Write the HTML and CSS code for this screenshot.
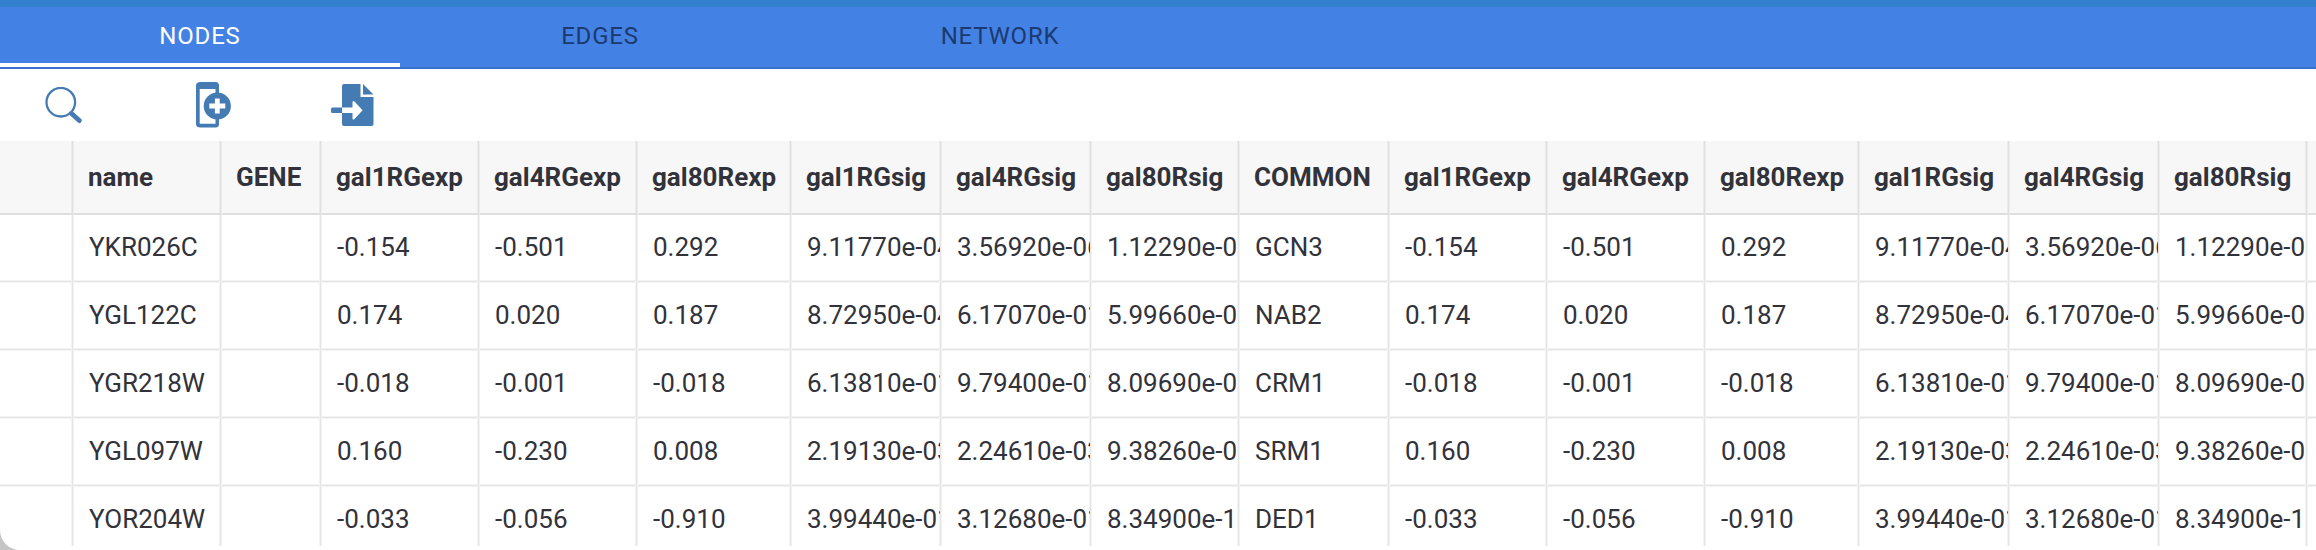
FILE: index.html
```
<!DOCTYPE html>
<html lang="en">
<head>
<meta charset="utf-8">
<title>Table browser</title>
<link rel="stylesheet" href="styles.css">
</head>
<body>
<div class="panel">
  <nav class="tabs">
    <div class="tab active">NODES</div>
    <div class="tab">EDGES</div>
    <div class="tab">NETWORK</div>
  </nav>
  <div class="toolbar">
    <svg class="icon" width="38" height="38" viewBox="0 0 38 38"><circle cx="16.800" cy="15.200" r="14.300" fill="none" stroke="#457bb3" stroke-width="2.300"/><path d="M27.500 26.500L35.300 33.600" stroke="#457bb3" stroke-width="4.800" stroke-linecap="round"/></svg>
    <svg class="icon phone" width="36" height="46" viewBox="0 0 36 46"><path fill="#457bb3" fill-rule="evenodd" d="M4.500 0H19.500Q23 0 23 3.500V42Q23 45.500 19.500 45.500H4.500Q0 45.500 0 42V3.500Q0 0 4.500 0ZM3.700 7V41.700H19.500V7Z"/><circle cx="21.300" cy="24" r="13.600" fill="#457bb3"/><path d="M21.300 16.500V31.500M13.300 24H29.300" stroke="#fff" stroke-width="4.800" stroke-linejoin="round"/></svg>
    <svg class="icon file" width="43" height="42" viewBox="0 0 43 42"><path fill="#457bb3" d="M13 0H29.500V13H42.500V40Q42.500 42 40.500 42H13Q11 42 11 40V2Q11 0 13 0ZM32 0L42.500 10.500H32ZM11 23.500H1.500Q0 23.500 0 25V27.500Q0 29 1.500 29H11Z"/><path fill="#fff" d="M11 23.500H21.500V18.500Q21.500 16 23.500 17.500L31.600 26.200L23.500 35Q21.500 36.500 21.500 34V29H11Z"/></svg>
  </div>
  <div class="grid" id="grid"></div>
</div>
<script src="table.js"></script>
</body>
</html>
```

FILE: styles.css
```
body {
  margin: 0;
  height: 550px;
  overflow: hidden;
  background: #c4c4c4;
  font-family: Roboto, sans-serif;
  color: #32323a;
}
.panel {
  height: 550px;
  overflow: hidden;
  background: #fff;
  border-bottom-left-radius: 20px;
}
.tabs {
  display: flex;
  box-sizing: border-box;
  height: 69px;
  border-top: 7px solid #3380cf;
  border-bottom: 2px solid #3970cc;
  background: #4481e4;
}
.tab {
  box-sizing: border-box;
  width: 400px;
  height: 60px;
  padding: 2px 0 0;
  line-height: 54px;
  text-align: center;
  font-size: 24px;
  letter-spacing: 0.8px;
  color: #1b3a70;
}
.tab.active {
  border-bottom: 4px solid #fff;
  color: #fff;
}
.toolbar {
  display: flex;
  align-items: flex-start;
  box-sizing: border-box;
  height: 72px;
  padding: 13px 0 0 44px;
}
.icon {
  flex: none;
  margin-top: 5px;
}
.icon.phone {
  margin: 0 0 0 114px;
}
.icon.file {
  margin: 2px 0 0 98.5px;
}
.grid {
  width: 2460px;
  height: 405px;
  overflow: hidden;
}
.row {
  display: grid;
  grid-template-columns: 74px 148px 100px 158px 158px 154px 150px 150px 148px 150px 158px 158px 154px 150px 150px 148px 150px;
  height: 68px;
}
/* Cell rules are a darker centre pixel with a lighter one on each side. */
.cell {
  --edge: #f3f3f3;
  --core: #e5e5e6;
  box-sizing: border-box;
  overflow: hidden;
  white-space: nowrap;
  padding-left: 15px;
  border-right: 2px solid transparent;
  border-bottom: 3px solid transparent;
  background-image:
    linear-gradient(90deg, var(--edge) 1px, var(--core) 1px, var(--core) 2px, var(--edge) 2px),
    linear-gradient(var(--edge) 1px, var(--core) 1px, var(--core) 2px, var(--edge) 2px);
  background-origin: border-box;
  background-position: right top, left bottom;
  background-size: 3px 100%, 100% 3px;
  background-repeat: no-repeat;
  font-size: 26px;
  line-height: 64px;
}
.head {
  height: 74px;
}
.head .cell {
  --edge: #ececec;
  --core: #dfdfe0;
  padding-left: 14px;
  border-bottom: 2px solid #dfdfe1;
  background-color: #f7f7f7;
  background-size: 3px 100%, 0 0;
  font-weight: 700;
  line-height: 72px;
}
```

FILE: table.js
```
const exp = ["gal1RGexp", "gal4RGexp", "gal80Rexp", "gal1RGsig", "gal4RGsig", "gal80Rsig"];
const rows = [
  ["YKR026C", "GCN3", "-0.154", "-0.501", "0.292", "9.11770e-04", "3.56920e-06", "1.12290e-0"],
  ["YGL122C", "NAB2", "0.174", "0.020", "0.187", "8.72950e-04", "6.17070e-01", "5.99660e-0"],
  ["YGR218W", "CRM1", "-0.018", "-0.001", "-0.018", "6.13810e-01", "9.79400e-01", "8.09690e-0"],
  ["YGL097W", "SRM1", "0.160", "-0.230", "0.008", "2.19130e-03", "2.24610e-03", "9.38260e-0"],
  ["YOR204W", "DED1", "-0.033", "-0.056", "-0.910", "3.99440e-01", "3.12680e-01", "8.34900e-1"]
];
const grid = document.getElementById("grid");
function addRow(values, className) {
  const row = document.createElement("div");
  row.className = className;
  for (const value of values) {
    const cell = document.createElement("div");
    cell.className = "cell";
    cell.textContent = value;
    row.append(cell);
  }
  grid.append(row);
}
addRow(["", "name", "GENE", ...exp, "COMMON", ...exp, ""], "row head");
for (const [name, common, ...values] of rows) {
  addRow(["", name, "", ...values, common, ...values, ""], "row");
}
```
